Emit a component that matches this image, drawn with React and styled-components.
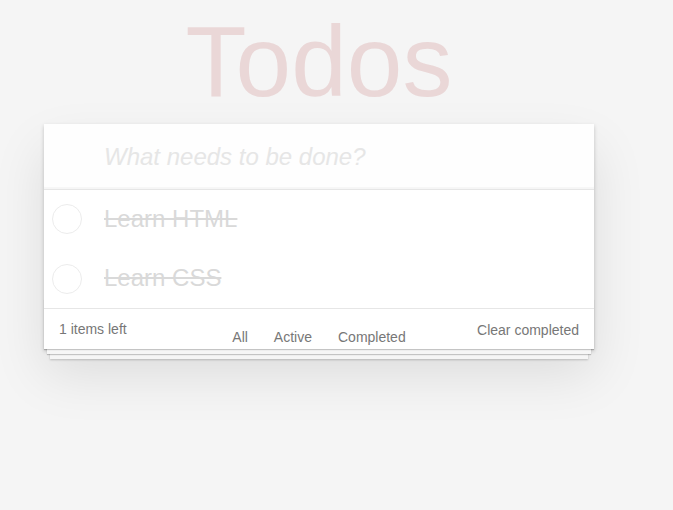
import React from "react";
import styled, { createGlobalStyle } from "styled-components";

const Global = createGlobalStyle`
  html, body { margin: 0; padding: 0; }
  body {
    min-height: 100vh;
    background: #f5f5f5;
    font-family: "Liberation Sans", Arial, sans-serif;
    color: #4d4d4d;
    -webkit-font-smoothing: antialiased;
  }
`;

const Page = styled.div`
  width: 550px;
  margin: 0 0 0 44px;
  padding-top: 11px;
`;

const Title = styled.h1`
  margin: 0 0 13px;
  height: 100px;
  font-size: 100px;
  line-height: 100px;
  font-weight: 400;
  text-align: center;
  color: rgba(175, 47, 47, 0.15);
`;

const Card = styled.section`
  position: relative;
  background: #fff;
  box-shadow: 0 2px 4px 0 rgba(0, 0, 0, 0.2), 0 25px 50px 0 rgba(0, 0, 0, 0.1);
`;

const NewTodo = styled.input`
  display: block;
  box-sizing: border-box;
  width: 100%;
  height: 65px;
  margin: 0;
  padding: 16px 16px 16px 60px;
  border: none;
  background: rgba(0, 0, 0, 0.003);
  box-shadow: inset 0 -2px 1px rgba(0, 0, 0, 0.03);
  font-family: inherit;
  font-size: 24px;
  line-height: 1.4em;
  color: #4d4d4d;
  outline: none;
  &::placeholder {
    font-style: italic;
    color: #e6e6e6;
  }
`;

const List = styled.ul`
  list-style: none;
  margin: 0;
  padding: 0;
  border-top: 1px solid #e6e6e6;
`;

const Item = styled.li`
  display: flex;
  align-items: center;
  height: 59px;
  box-sizing: border-box;
  border-bottom: 1px solid transparent;
  padding-left: 8px;
  font-size: 24px;
  &:last-child {
    border-bottom: none;
  }
`;

const Toggle = styled.span`
  flex: none;
  width: 30px;
  height: 30px;
  box-sizing: border-box;
  border-radius: 50%;
  border: 1px solid #ececec;
`;

const Label = styled.label`
  padding-left: 22px;
  line-height: 1.2;
  color: ${(p) => (p.$done ? "#d9d9d9" : "#4d4d4d")};
  text-decoration: ${(p) => (p.$done ? "line-through" : "none")};
`;

const Footer = styled.footer`
  position: relative;
  display: grid;
  grid-template-columns: 1fr auto 1fr;
  align-items: start;
  height: 41px;
  box-sizing: border-box;
  padding: 10px 15px;
  border-top: 1px solid #e6e6e6;
  color: #777;
  font-size: 14px;
  line-height: 16px;
  &::before {
    content: "";
    position: absolute;
    left: 0;
    right: 0;
    bottom: 0;
    height: 50px;
    overflow: hidden;
    pointer-events: none;
    box-shadow: 0 1px 1px rgba(0, 0, 0, 0.2), 0 8px 0 -3px #f6f6f6,
      0 9px 1px -3px rgba(0, 0, 0, 0.2), 0 16px 0 -6px #f6f6f6,
      0 17px 2px -6px rgba(0, 0, 0, 0.2);
  }
`;

const Count = styled.span`
  padding-top: 2px;
`;

const Filters = styled.ul`
  display: flex;
  list-style: none;
  margin: 0;
  padding: 6px 0 0;
  gap: 4px;
`;

const FilterLink = styled.a`
  display: block;
  margin: 0 3px;
  padding: 3px 7px;
  border: 1px solid transparent;
  border-radius: 3px;
  color: inherit;
  text-decoration: none;
  line-height: 16px;
`;

const Clear = styled.button`
  justify-self: end;
  margin: 0;
  padding: 3px 0 0;
  border: none;
  background: none;
  font-family: inherit;
  font-size: 14px;
  line-height: 16px;
  color: #777;
  cursor: pointer;
`;

const todos = [
  { id: 1, title: "Learn HTML", done: true },
  { id: 2, title: "Learn CSS", done: true },
];

export default function App() {
  return (
    <>
      <Global />
      <Page>
        <Title>Todos</Title>
        <Card>
          <NewTodo placeholder="What needs to be done?" />
          <List>
            {todos.map((t) => (
              <Item key={t.id}>
                <Toggle />
                <Label $done={t.done}>{t.title}</Label>
              </Item>
            ))}
          </List>
          <Footer>
            <Count>1 items left</Count>
            <Filters>
              <li><FilterLink href="#/">All</FilterLink></li>
              <li><FilterLink href="#/active">Active</FilterLink></li>
              <li><FilterLink href="#/completed">Completed</FilterLink></li>
            </Filters>
            <Clear>Clear completed</Clear>
          </Footer>
        </Card>
      </Page>
    </>
  );
}
